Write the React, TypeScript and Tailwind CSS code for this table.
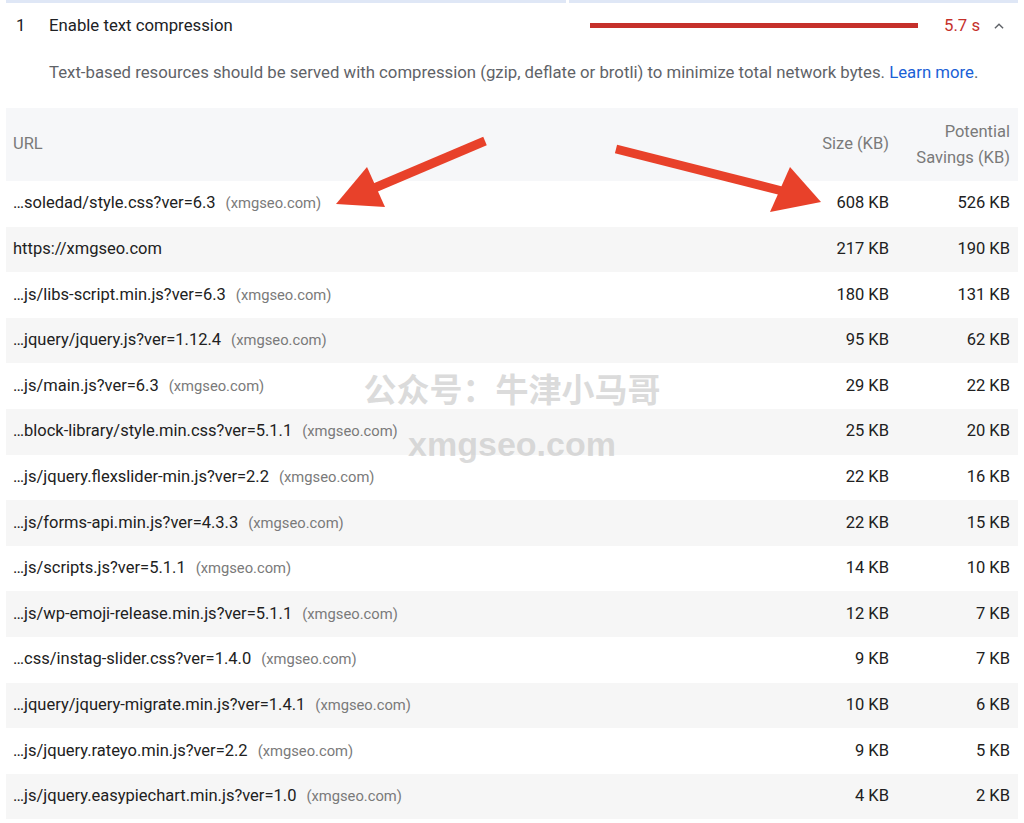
import React from "react";

const rows = [
  { url: "…soledad/style.css?ver=6.3", size: "608 KB", savings: "526 KB" },
  { url: "https://xmgseo.com", size: "217 KB", savings: "190 KB", noHost: true },
  { url: "…js/libs-script.min.js?ver=6.3", size: "180 KB", savings: "131 KB" },
  { url: "…jquery/jquery.js?ver=1.12.4", size: "95 KB", savings: "62 KB" },
  { url: "…js/main.js?ver=6.3", size: "29 KB", savings: "22 KB" },
  { url: "…block-library/style.min.css?ver=5.1.1", size: "25 KB", savings: "20 KB" },
  { url: "…js/jquery.flexslider-min.js?ver=2.2", size: "22 KB", savings: "16 KB" },
  { url: "…js/forms-api.min.js?ver=4.3.3", size: "22 KB", savings: "15 KB" },
  { url: "…js/scripts.js?ver=5.1.1", size: "14 KB", savings: "10 KB" },
  { url: "…js/wp-emoji-release.min.js?ver=5.1.1", size: "12 KB", savings: "7 KB" },
  { url: "…css/instag-slider.css?ver=1.4.0", size: "9 KB", savings: "7 KB" },
  { url: "…jquery/jquery-migrate.min.js?ver=1.4.1", size: "10 KB", savings: "6 KB" },
  { url: "…js/jquery.rateyo.min.js?ver=2.2", size: "9 KB", savings: "5 KB" },
  { url: "…js/jquery.easypiechart.min.js?ver=1.0", size: "4 KB", savings: "2 KB" },
];

export default function App() {
  return (
    <div className="relative w-[1024px] h-[823px] bg-white overflow-hidden font-['Roboto',_'Liberation_Sans',_sans-serif]">
      {/* top strip */}
      <div className="flex gap-[3px] px-[6px] h-[3px]">
        <div className="w-[560px] bg-[#dfe7f6]" />
        <div className="flex-1 bg-[#dfe7f6]" />
      </div>

      {/* audit header */}
      <div className="flex items-center h-[45px] pl-[16px] pr-[18px]">
        <span className="w-[33px] text-[16.75px] text-[#202124]">1</span>
        <span className="text-[16.75px] text-[#202124]">Enable text compression</span>
        <div className="ml-auto w-[328px] h-[5px] bg-[#c5302b] mr-[26px]" />
        <span className="text-[16.75px] text-[#c5302b] w-[42px]">5.7 s</span>
        <svg width="14" height="14" viewBox="0 0 24 24" className="ml-[6px]">
          <path d="M5 16 L12 9 L19 16" fill="none" stroke="#5f6368" strokeWidth="2.4" />
        </svg>
      </div>

      <p className="pl-[49px] pt-[11px] text-[16.75px] leading-[26px] text-[#5f6368]">
        Text-based resources should be served with compression (gzip, deflate or brotli) to minimize total network bytes.{" "}
        <span className="text-[#1a5fd6]">Learn more</span>.
      </p>

      {/* table */}
      <div className="mt-[23px] mx-[6px]">
        <div className="grid grid-cols-[1fr_120px_121px] items-center h-[73px] bg-[#f6f7f9] pl-[7px] pr-[8px] text-[16.5px] text-[#7a7a7a]">
          <span>URL</span>
          <span className="text-right">Size (KB)</span>
          <span className="text-right leading-[26px]">
            Potential
            <br />
            Savings (KB)
          </span>
        </div>
        {rows.map((r, i) => (
          <div
            key={r.url}
            className={`grid grid-cols-[1fr_120px_121px] items-center h-[45.6px] pl-[7px] pr-[8px] text-[16.5px] text-[#212121] ${
              i % 2 === 1 ? "bg-[#f6f6f6]" : "bg-white"
            }`}
          >
            <span className="whitespace-nowrap">
              {r.url}
              {!r.noHost && (
                <span className="ml-[10px] text-[14.75px] text-[#7a7a7a]">(xmgseo.com)</span>
              )}
            </span>
            <span className="text-right">{r.size}</span>
            <span className="text-right">{r.savings}</span>
          </div>
        ))}
      </div>

      {/* watermark */}
      <div className="absolute left-0 right-0 top-[364px] flex flex-col items-center pointer-events-none">
        <span className="text-[33px] leading-[48px] font-bold text-[#bdbdbd]/55 font-['Noto_Sans_CJK_SC',_sans-serif]">
          公众号：牛津小马哥
        </span>
        <span className="mt-[12px] text-[34px] leading-[40px] font-bold text-[#bdbdbd]/55 font-['Liberation_Sans',_sans-serif]">
          xmgseo.com
        </span>
      </div>

      {/* arrows */}
      <svg className="absolute left-0 top-0 pointer-events-none" width="1024" height="823">
        <line x1="485" y1="141" x2="372" y2="189" stroke="#e8412a" strokeWidth="9" />
        <polygon points="336,204 367,167 385,207" fill="#e8412a" />
        <line x1="616" y1="149" x2="786" y2="192" stroke="#e8412a" strokeWidth="9" />
        <polygon points="821,202 790,167 770,212" fill="#e8412a" />
      </svg>
    </div>
  );
}
